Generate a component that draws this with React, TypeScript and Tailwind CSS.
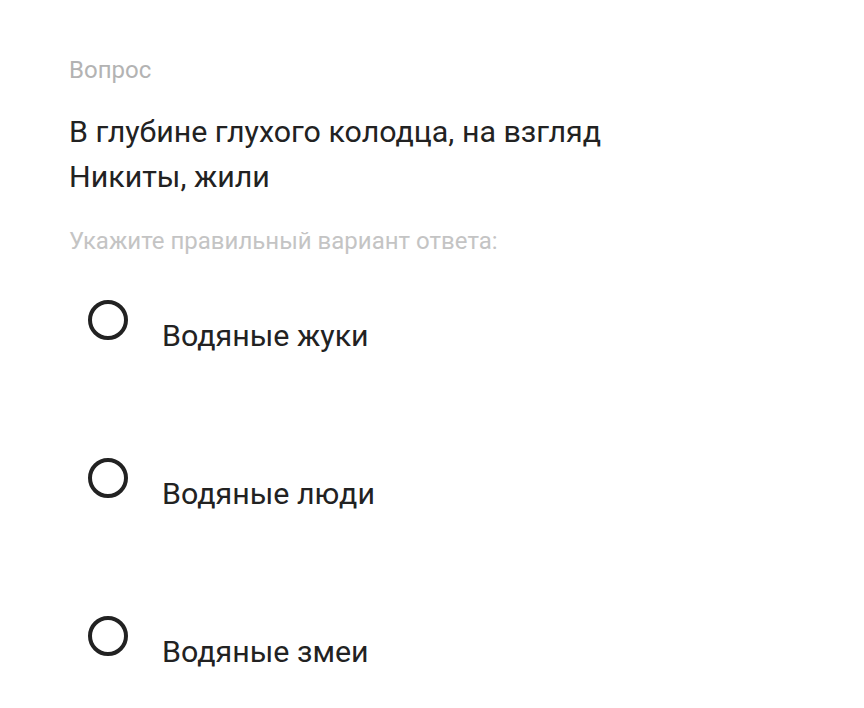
const options = ["Водяные жуки", "Водяные люди", "Водяные змеи"];

function Radio() {
  return (
    <span className="block w-[40px] h-[40px] shrink-0 rounded-full border-[4px] border-[#222222]" />
  );
}

export default function App() {
  return (
    <div
      className="min-h-[708px] w-[864px] bg-white pl-[69px] pt-[56px] text-[#222222]"
      style={{ fontFamily: "Roboto, 'Noto Sans', sans-serif" }}
    >
      <div className="text-[24px] leading-[28px] text-[#b3b3b3]">Вопрос</div>

      <div className="mt-[25px] max-w-[600px] text-[30.4px] leading-[45px]">
        В глубине глухого колодца, на взгляд Никиты, жили
      </div>

      <div className="mt-[27px] text-[24px] leading-[30px] text-[#c4c4c4]">
        Укажите правильный вариант ответа:
      </div>

      <div className="mt-[44px] flex flex-col gap-[102px]">
        {options.map((opt) => (
          <div key={opt} className="flex items-start pl-[19px]">
            <Radio />
            <span className="ml-[34px] mt-[16px] text-[30.4px] leading-[40px]">
              {opt}
            </span>
          </div>
        ))}
      </div>
    </div>
  );
}
